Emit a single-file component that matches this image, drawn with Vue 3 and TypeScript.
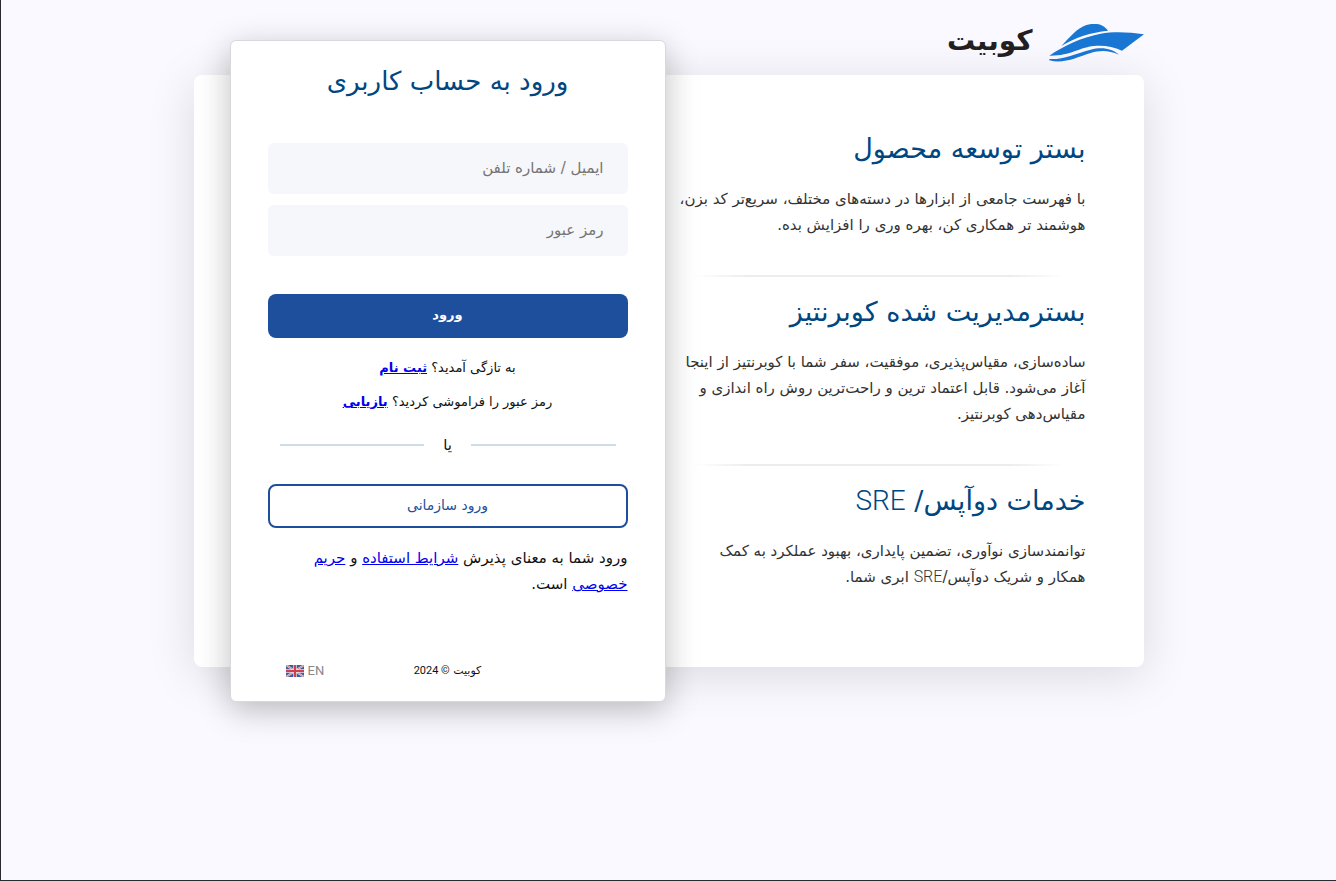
<script setup lang="ts">
import { ref } from 'vue'

interface Piece {
  text: string
  latin?: boolean
}
interface Feature {
  title: Piece[]
  lines: Piece[][]
}

const features: Feature[] = [
  {
    title: [{ text: 'بستر توسعه محصول' }],
    lines: [
      [{ text: 'با فهرست جامعی از ابزارها در دسته‌های مختلف، سریع‌تر کد بزن،' }],
      [{ text: 'هوشمند تر همکاری کن، بهره وری را افزایش بده.' }],
    ],
  },
  {
    title: [{ text: 'بسترمدیریت شده کوبرنتیز' }],
    lines: [
      [{ text: 'ساده‌سازی، مقیاس‌پذیری، موفقیت، سفر شما با کوبرنتیز از اینجا' }],
      [{ text: 'آغاز می‌شود. قابل اعتماد ترین و راحت‌ترین روش راه اندازی و' }],
      [{ text: 'مقیاس‌دهی کوبرنتیز.' }],
    ],
  },
  {
    title: [{ text: 'خدمات دوآپس/ ' }, { text: 'SRE', latin: true }],
    lines: [
      [{ text: 'توانمندسازی نوآوری، تضمین پایداری، بهبود عملکرد به کمک' }],
      [{ text: 'همکار و شریک دوآپس/' }, { text: 'SRE', latin: true }, { text: ' ابری شما.' }],
    ],
  },
]

const account = ref('')
const password = ref('')
</script>

<template>
  <div class="page" dir="rtl" lang="fa">
    <div class="wrap">
      <header class="brand">
        <svg class="boat" viewBox="0 0 285 117" aria-hidden="true">
          <path d="M37 66C60 42 84 12 112 3C132-3 152 -1 163 7C169 11 174 16 177 20C125 25 80 40 37 66Z" />
          <path d="M1 95C45 65 95 41 155 29C195 22 240 24 285 31L219 80C192 68 165 63 135 66C90 70 65 96 1 95Z" />
          <path d="M1 105C45 107 75 90 125 77C160 68 190 74 210 92C180 79 155 78 125 87C85 99 45 121 1 109Z" />
        </svg>
        <span class="name">کوبیت</span>
      </header>

      <main class="panel">
        <section class="features">
          <article v-for="(f, i) in features" :key="i" class="feature">
            <h2><span v-for="(p, k) in f.title" :key="k" :class="{ latin: p.latin }">{{ p.text }}</span></h2>
            <p>
              <span v-for="(line, j) in f.lines" :key="j" class="line"><span v-for="(p, k) in line" :key="k" :class="{ latin: p.latin }">{{ p.text }}</span></span>
            </p>
          </article>
        </section>

        <section class="login">
          <h1>ورود به حساب کاربری</h1>
          <form @submit.prevent>
            <input v-model="account" type="text" aria-label="ایمیل / شماره تلفن" placeholder="ایمیل / شماره تلفن" />
            <input v-model="password" type="password" aria-label="رمز عبور" placeholder="رمز عبور" />
            <button class="primary" type="submit">ورود</button>
          </form>
          <p class="hint">به تازگی آمدید؟ <a href="#">ثبت نام</a></p>
          <p class="hint">رمز عبور را فراموشی کردید؟ <a href="#">بازیابی</a></p>
          <div class="or"><span>یا</span></div>
          <button class="outline" type="button">ورود سازمانی</button>
          <p class="terms">
            ورود شما به معنای پذیرش <a href="#">شرایط استفاده</a> و <a href="#">حریم خصوصی</a> است.
          </p>
          <footer class="foot">
            <span class="copy">کوبیت <span class="num">© 2024</span></span>
            <a class="lang" href="#" dir="ltr">
              <svg viewBox="0 0 18 12" aria-hidden="true">
                <rect width="18" height="12" fill="#3c5a9c" />
                <path d="M0 0L18 12M18 0L0 12" stroke="#d9d3e0" stroke-width="2" />
                <path d="M0 0L18 12M18 0L0 12" stroke="#d8717c" stroke-width="0.8" />
                <path d="M9 0V12M0 6H18" stroke="#ecdfe4" stroke-width="3.4" />
                <path d="M9 0V12M0 6H18" stroke="#cf3f4c" stroke-width="2" />
              </svg>
              <span>EN</span>
            </a>
          </footer>
        </section>
      </main>
    </div>
  </div>
</template>

<style>
body {
  margin: 0;
}
</style>

<style scoped>
* {
  box-sizing: border-box;
}
.page {
  min-height: 100vh;
  padding: 24px 16px;
  border-left: 1px solid #2b2a2f;
  border-bottom: 1px solid #2b2a2f;
  background: #faf9ff;
  color: #111;
  font-family: "DejaVu Sans", Roboto, sans-serif;
  font-size: 15px;
  line-height: 26px;
}
.wrap {
  max-width: 950px;
  margin: 0 auto;
}
h1,
h2,
p {
  margin: 0;
  font-weight: 400;
}
a {
  color: #00e;
}
.brand {
  display: flex;
  gap: 16px;
  height: 51px;
}
.boat {
  width: 95px;
  height: 39px;
  fill: #1976d2;
}
.name {
  color: #231f20;
  font-size: 28px;
  font-weight: 700;
  line-height: 34px;
}
.panel {
  display: flex;
  border-radius: 8px;
  background: #fff;
  box-shadow: 0 8px 48px rgba(0, 0, 0, 0.13);
}
.features {
  flex: 1;
  min-width: 0;
  padding: 54px 58px 77px 0;
}
.feature h2 {
  margin-bottom: 17px;
  color: #004680;
  font-size: 27px;
  line-height: 40px;
}
.latin {
  font-family: Roboto, sans-serif;
  font-size: 16px;
  font-weight: 300;
}
.feature h2 .latin {
  font-size: 28px;
}
.feature p {
  color: #333;
}
.line {
  display: block;
  white-space: nowrap;
}
.feature:not(:last-child)::after {
  content: "";
  display: block;
  height: 2px;
  margin: 37px 22px 15px 28px;
  background: linear-gradient(to right, transparent, #ececec 15%, #ececec 85%, transparent);
}
.login {
  display: flex;
  flex-direction: column;
  flex: none;
  width: 436px;
  margin: -35px 0 -35px 36px;
  padding: 20px 37px 16px;
  border: 1px solid #d9d9dc;
  border-radius: 6px;
  background: #fff;
  box-shadow: 0 8px 32px rgba(0, 0, 0, 0.25);
}
h1 {
  margin-bottom: 42px;
  color: #004680;
  font-size: 26px;
  line-height: 40px;
  text-align: center;
}
form {
  display: flex;
  flex-direction: column;
  gap: 11px;
  margin-bottom: 17px;
}
input {
  height: 51px;
  padding: 0 24px 2px;
  border: 0;
  border-radius: 6px;
  background: #f5f7fb;
  font: inherit;
}
input::placeholder {
  color: #757575;
  opacity: 1;
}
button {
  height: 44px;
  padding: 0 0 2px;
  border-radius: 8px;
  font: inherit;
  font-size: 14px;
  cursor: pointer;
}
.primary {
  margin-top: 27px;
  border: 0;
  background: #1d4f9c;
  color: #fff;
  font-size: 13px;
  font-weight: 700;
}
.hint {
  margin-bottom: 8px;
  font-size: 13px;
  text-align: center;
}
.hint a {
  font-weight: 700;
}
.or {
  display: flex;
  align-items: center;
  gap: 19px;
  margin: 9px 12px 26px;
}
.or::before,
.or::after {
  content: "";
  flex: 1;
  height: 2px;
  background: #d1dcea;
}
.outline {
  border: 2px solid #1d4f9c;
  background: #fff;
  color: #1d4f9c;
}
.terms {
  margin: 17px 0 61px;
}
.foot {
  display: grid;
  grid-template-columns: 1fr auto 1fr;
  align-items: center;
}
.copy {
  grid-column: 2;
  font-size: 11px;
}
.num {
  font-family: Roboto, sans-serif;
}
.lang {
  display: flex;
  align-items: center;
  justify-self: end;
  gap: 4px;
  margin-left: 18px;
  color: #888;
  font-family: Roboto, sans-serif;
  font-size: 13px;
  text-decoration: none;
}
.lang svg {
  width: 18px;
  height: 12px;
}
</style>
